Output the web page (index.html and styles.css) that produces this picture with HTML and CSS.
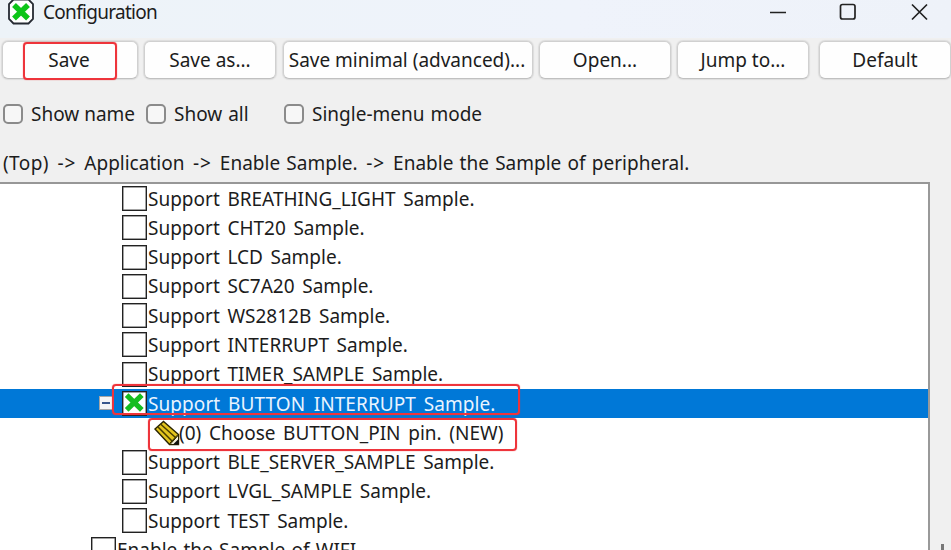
FILE: index.html
```html
<!DOCTYPE html>
<html lang="en">
<head>
<meta charset="utf-8">
<title>Configuration</title>
<link rel="stylesheet" href="styles.css">
</head>
<body>
<header class="titlebar">
  <svg class="logo" width="26" height="25" viewBox="0 0 26 25"><path d="M5.500 -.5H20.500L25 4V19L20.500 23.500H5.500L1 19V4Z" fill="#fff" stroke="#252a32" stroke-width="1.800"/><path d="M6 5L20 18.500M20 5L6 18.500" stroke="#0cc518" stroke-width="5.500"/></svg>
  <h1 class="title">Configuration</h1>
  <svg class="controls" width="160" height="24" viewBox="0 0 160 24" fill="none" stroke="#222" stroke-width="1.700"><path d="M0 12.500H16M142 4.500L157 19.500M157 4.500L142 19.500"/><rect x="70.500" y="4.500" width="14.500" height="14.500" rx="2"/></svg>
</header>
<nav class="toolbar">
  <button class="btn save"><span>Save</span><i class="mark mark-save"></i></button>
  <button class="btn save-as"><span>Save as...</span></button>
  <button class="btn minimal"><span>Save minimal (advanced)...</span></button>
  <button class="btn open"><span>Open...</span></button>
  <button class="btn jump"><span>Jump to...</span></button>
  <button class="btn default"><span>Default</span></button>
</nav>
<div class="options">
  <label class="option name"><i class="check"></i><span>Show name</span></label>
  <label class="option all"><i class="check"></i><span>Show all</span></label>
  <label class="option single"><i class="check"></i><span>Single-menu mode</span></label>
</div>
<p class="path"><span class="top">(Top)</span> <span class="arrow">-&gt;</span> Application <span class="arrow">-&gt;</span> Enable Sample. <span class="arrow">-&gt;</span> Enable the Sample of peripheral.</p>
<main class="pane">
  <ul class="tree">
    <li class="row"><i class="box"></i><span>Support BREATHING_LIGHT Sample.</span></li>
    <li class="row"><i class="box"></i><span>Support CHT20 Sample.</span></li>
    <li class="row"><i class="box"></i><span>Support LCD Sample.</span></li>
    <li class="row"><i class="box"></i><span>Support SC7A20 Sample.</span></li>
    <li class="row"><i class="box"></i><span>Support WS2812B Sample.</span></li>
    <li class="row"><i class="box"></i><span>Support INTERRUPT Sample.</span></li>
    <li class="row"><i class="box"></i><span>Support TIMER_SAMPLE Sample.</span></li>
    <li class="row selected"><i class="expander"></i><i class="box"><svg width="23" height="23" viewBox="0 0 22 22"><path d="M3.500 3L18 17M18 3L3.500 17" stroke="#14bd20" stroke-width="5"/></svg></i><span>Support BUTTON_INTERRUPT Sample.</span><i class="mark mark-row"></i></li>
    <li class="row child"><svg class="pencil" width="28" height="26" viewBox="0 0 28 26"><path d="M2 9L10.500 1.500L25.500 14.500V24.500H16.500Z" fill="#e3c51d" stroke="#292400" stroke-width="1.400"/><path d="M4.500 6.500L19 21M7.500 4L22.500 17.500" stroke="#493e00" stroke-width="1.500"/><path d="M25 14.500L16.500 23.500" stroke="#292400"/><path d="M25.500 15V24.500H17Z" fill="#f6f2dc" stroke="#292400"/><path d="M25.500 19V24.500H20Z" fill="#111"/></svg><span>(0) Choose BUTTON_PIN pin. (NEW)</span><i class="mark mark-child"></i></li>
    <li class="row"><i class="box"></i><span>Support BLE_SERVER_SAMPLE Sample.</span></li>
    <li class="row"><i class="box"></i><span>Support LVGL_SAMPLE Sample.</span></li>
    <li class="row"><i class="box"></i><span>Support TEST Sample.</span></li>
    <li class="row parent"><i class="box"></i><span>Enable the Sample of WIFI.</span></li>
  </ul>
  <div class="scroll"><i class="thumb"></i></div>
</main>
</body>
</html>
```

FILE: styles.css
```css
* { box-sizing: border-box; }
body {
  margin: 0;
  width: 951px;
  height: 550px;
  overflow: hidden;
  display: flex;
  flex-direction: column;
  background: #f0f0f0;
  color: #1c1c1c;
  font: 19px/29px "Noto Sans", "Open Sans", sans-serif;
  white-space: nowrap;
}
.titlebar {
  height: 38px;
  flex: none;
  display: flex;
  align-items: flex-start;
  padding-left: 8px;
  background: linear-gradient(90deg, #edf3f8, #eff3fb 60%, #eef2f9);
}
.title { margin: -2px 0 0 9px; font-size: 19px; font-weight: 400; letter-spacing: -.7px; }
.controls { margin: 0 21px 0 auto; }
.toolbar { height: 42px; flex: none; display: flex; padding: 3px 0 0 2px; }
.btn {
  position: relative;
  flex: none;
  height: 38px;
  padding: 1px 0 0;
  border: 1px solid #d0d0d0;
  border-bottom-color: #c0c0c0;
  border-radius: 6px;
  background: #fefefe;
  color: inherit;
  font: inherit;
  box-shadow: 0 0 1px 1px #dcdcdc;
}
.save { width: 136px; margin-right: 6px; padding-right: 2px; }
.save-as { width: 132px; margin-right: 7px; }
.minimal { width: 250px; margin-right: 6px; padding-right: 2px; }
.open { width: 132px; margin-right: 6px; }
.jump { width: 132px; margin-right: 10px; }
.default { width: 132px; }
.mark { position: absolute; border: 2px solid #ee343b; border-radius: 4px; box-shadow: 0 0 1px #ee343b; }
.mark-save { left: 20px; top: 0; width: 94px; height: 38px; }
.options { height: 68px; flex: none; display: flex; padding-left: 3px; align-items: center; word-spacing: 1px; }
.option { display: flex; align-items: center; gap: 8px; flex: none; }
.name { width: 143px; word-spacing: 0; }
.all { width: 138px; }
.check { width: 20px; height: 20px; border: 2px solid #8b8b8b; border-radius: 5px; background: #f7f7f7; }
.path { margin: 0; padding: 0 0 0 3px; height: 34px; line-height: 31px; flex: none; word-spacing: 1.300px; }
.top { letter-spacing: .4px; }
.arrow { letter-spacing: .8px; padding: 0 2px 0 2.400px; }
.pane { flex: 1; min-height: 0; display: flex; }
.tree {
  flex: none;
  width: 930px;
  height: 368px;
  margin: 0;
  padding: 0;
  list-style: none;
  overflow: hidden;
  background: #fff;
  border-top: 2px solid #979797;
  border-right: 2px solid #999;
  word-spacing: 2.700px;
}
.row { position: relative; display: flex; align-items: center; height: 29.270px; padding-left: 122px; }
.row span { line-height: 29px; padding-top: 1px; }
.box { flex: none; width: 25px; height: 25px; margin-right: 1px; border: 1px solid #222; background: #fff; box-shadow: inset 0 0 0 .5px #555, inset 0 0 1px #777; }
.box svg { display: block; }
.selected { background: #0078d7; color: #e9f4ff; padding-left: 99px; z-index: 1; }
.selected span { letter-spacing: .08px; }
.expander {
  flex: none;
  width: 14px;
  height: 14px;
  margin-right: 9px;
  border: 1px solid #a5a5a5;
  background: linear-gradient(#38568b, #38568b) center / 8px 2px no-repeat, #f5f5f5;
}
.mark-row { left: 112px; top: -5px; width: 408px; height: 31px; }
.child { padding-left: 153px; }
.pencil { flex: none; margin-right: -2px; }
.mark-child { left: 148px; top: 0; width: 369px; height: 33px; z-index: 1; }
.parent { padding-left: 91px; word-spacing: 1.300px; }
.scroll { flex: 1; display: flex; align-items: flex-end; padding-left: 11px; }
.thumb { width: 3px; height: 6px; background: #777; }
```
